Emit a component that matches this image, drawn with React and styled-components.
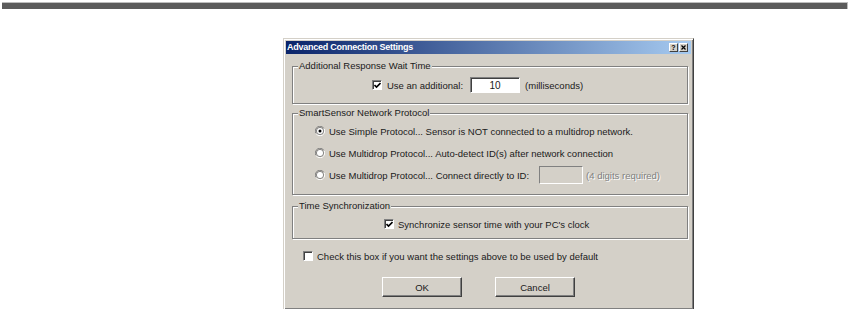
import React from 'react';
import styled, { createGlobalStyle } from 'styled-components';

const Global = createGlobalStyle`
  html, body { margin: 0; padding: 0; background: #ffffff; }
  body { font-family: "Liberation Sans", Arial, sans-serif; font-size: 9.5px; color: #1a1a1a; }
  * { box-sizing: border-box; }
`;

const Page = styled.div`
  width: 851px;
  height: 309px;
  overflow: hidden;
  padding-top: 2px;
`;

const TopRule = styled.div`
  margin: 0 3px 0 2px;
  height: 7px;
  background: #5b5b5b;
  border-top: 1px solid #bdbdbd;
  border-right: 1px solid #bdbdbd;
`;

const Dialog = styled.div`
  margin: 29px 0 0 283px;
  width: 411px;
  height: 272px;
  background: #d4d0c8;
  border: 1px solid;
  border-color: #d4d0c8 #404040 #404040 #d4d0c8;
  box-shadow: inset 1px 1px 0 #fff, inset -1px -1px 0 #808080;
  padding: 2px;
  display: flex;
  flex-direction: column;
`;

const TitleBar = styled.div`
  height: 13px;
  display: flex;
  align-items: center;
  padding: 0 3px 0 1px;
  background: linear-gradient(to right, #0a246a, #a6caf0);
`;

const TitleText = styled.div`
  flex: 1;
  color: #fff;
  font-weight: bold;
  font-size: 9px;
  line-height: 13px;
  letter-spacing: -0.25px;
`;

const CapButton = styled.div`
  width: 9px;
  height: 9px;
  margin-left: ${p => p.$ml || 0}px;
  background: #d4d0c8;
  border: 1px solid;
  border-color: #fff #404040 #404040 #fff;
  display: flex;
  align-items: center;
  justify-content: center;
  font-size: 7px;
  font-weight: bold;
  line-height: 7px;
  color: #000;
`;

const Content = styled.div`
  display: flex;
  flex-direction: column;
  padding: 0 0 0 6px;
`;

const Group = styled.fieldset`
  margin: ${p => p.$mt}px 0 0 0;
  padding: ${p => p.$pt}px 0 0 0;
  height: ${p => p.$h}px;
  width: 396px;
  min-width: 0;
  border: 1px solid #808080;
  box-shadow: 1px 1px 0 #fff, inset 1px 1px 0 #fff;
  display: flex;
  flex-direction: column;
  align-items: flex-start;
`;

const Legend = styled.legend`
  margin-left: 5px;
  padding: 0 1px;
  line-height: 12px;
  height: 12px;
  background: #d4d0c8;
`;

const Row = styled.div`
  display: flex;
  align-items: center;
  height: ${p => p.$h || 14}px;
  margin-left: ${p => p.$ml || 0}px;
  margin-top: ${p => p.$mt || 0}px;
  white-space: nowrap;
`;

const Label = styled.span`
  margin-left: ${p => p.$ml || 4}px;
  color: ${p => (p.$disabled ? '#808080' : '#1a1a1a')};
  text-shadow: ${p => (p.$disabled ? '1px 1px 0 #fff' : 'none')};
`;

const CheckBoxBox = styled.span`
  width: 10px;
  height: 10px;
  flex: none;
  background: #fff;
  border: 1px solid;
  border-color: #808080 #fff #fff #808080;
  box-shadow: inset 1px 1px 0 #404040;
  display: flex;
  align-items: center;
  justify-content: center;
`;

const CheckBox = ({ checked }) => (
  <CheckBoxBox>
    {checked && (
      <svg width="7" height="7" viewBox="0 0 7 7">
        <path d="M0.5 3 L2.5 5 L6.5 1" stroke="#000" strokeWidth="1.6" fill="none" />
      </svg>
    )}
  </CheckBoxBox>
);

const RadioWrap = styled.span`
  width: 10px;
  height: 10px;
  flex: none;
  display: flex;
`;

const Radio = ({ checked }) => (
  <RadioWrap>
    <svg width="10" height="10" viewBox="0 0 10 10">
      <path d="M9 2.5 A4.5 4.5 0 0 0 1 7.5" stroke="#808080" strokeWidth="1" fill="none" />
      <path d="M1 7.5 A4.5 4.5 0 0 0 9 2.5" stroke="#ffffff" strokeWidth="1" fill="none" />
      <circle cx="5" cy="5" r="3.6" fill="#fff" stroke="#404040" strokeWidth="0.6" />
      {checked && <circle cx="5" cy="5" r="1.5" fill="#000" />}
    </svg>
  </RadioWrap>
);

const TextInput = styled.div`
  width: ${p => p.$w}px;
  height: ${p => p.$h}px;
  margin-left: ${p => p.$ml}px;
  background: ${p => (p.$disabled ? '#d4d0c8' : '#fff')};
  border: 1px solid;
  border-color: #808080 #fff #fff #808080;
  box-shadow: ${p => (p.$disabled ? 'none' : 'inset 1px 1px 0 #404040')};
  display: flex;
  align-items: center;
  justify-content: center;
  font-size: 10px;
`;

const ButtonRow = styled.div`
  display: flex;
  gap: 33px;
  margin: 14px 0 0 90px;
`;

const Button = styled.div`
  width: 80px;
  height: 20px;
  background: #d4d0c8;
  border: 1px solid;
  border-color: #fff #404040 #404040 #fff;
  box-shadow: inset -1px -1px 0 #808080;
  display: flex;
  align-items: center;
  justify-content: center;
`;

export default function App() {
  return (
    <Page>
      <Global />
      <TopRule />
      <Dialog>
        <TitleBar>
          <TitleText>Advanced Connection Settings</TitleText>
          <CapButton>?</CapButton>
          <CapButton $ml={1}>
            <svg width="5" height="5" viewBox="0 0 5 5">
              <path d="M0.5 0.5 L4.5 4.5 M4.5 0.5 L0.5 4.5" stroke="#000" strokeWidth="1.2" />
            </svg>
          </CapButton>
        </TitleBar>
        <Content>
          <Group $mt={6} $h={44} $pt={5}>
            <Legend>Additional Response Wait Time</Legend>
            <Row $h={16} $ml={79}>
              <CheckBox checked />
              <Label $ml={5}>Use an additional:</Label>
              <TextInput $w={50} $h={16} $ml={7}>10</TextInput>
              <Label $ml={5}>(milliseconds)</Label>
            </Row>
          </Group>
          <Group $mt={3} $h={88} $pt={1}>
            <Legend>SmartSensor Network Protocol</Legend>
            <Row $h={22} $ml={22}>
              <Radio checked />
              <Label>Use Simple Protocol... Sensor is NOT connected to a multidrop network.</Label>
            </Row>
            <Row $h={22} $ml={22}>
              <Radio />
              <Label>Use Multidrop Protocol... Auto-detect ID(s) after network connection</Label>
            </Row>
            <Row $h={22} $ml={22}>
              <Radio />
              <Label>Use Multidrop Protocol... Connect directly to ID:</Label>
              <TextInput $w={44} $h={18} $ml={10} $disabled />
              <Label $ml={3} $disabled>(4 digits required)</Label>
            </Row>
          </Group>
          <Group $mt={5} $h={39} $pt={5}>
            <Legend>Time Synchronization</Legend>
            <Row $ml={91}>
              <CheckBox checked />
              <Label>Synchronize sensor time with your PC's clock</Label>
            </Row>
          </Group>
          <Row $ml={11} $mt={10}>
            <CheckBox />
            <Label>Check this box if you want the settings above to be used by default</Label>
          </Row>
          <ButtonRow>
            <Button>OK</Button>
            <Button>Cancel</Button>
          </ButtonRow>
        </Content>
      </Dialog>
    </Page>
  );
}
